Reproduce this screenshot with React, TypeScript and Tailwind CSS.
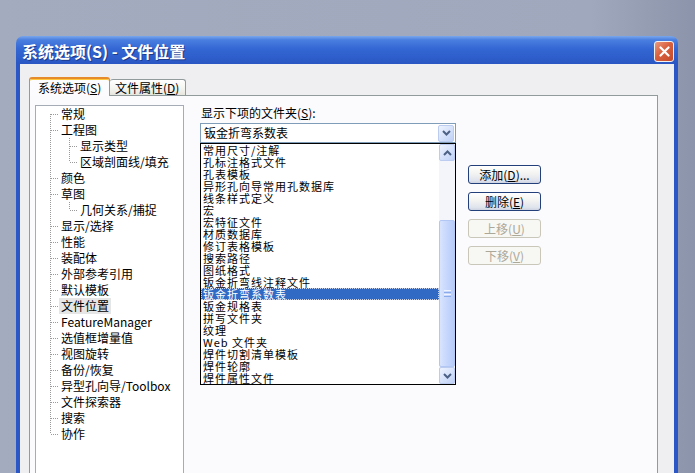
import type { ReactNode } from 'react';

type TreeItem = { label: string; level: 0 | 1 };

const treeItems: TreeItem[] = [
  { label: '常规', level: 0 },
  { label: '工程图', level: 0 },
  { label: '显示类型', level: 1 },
  { label: '区域剖面线/填充', level: 1 },
  { label: '颜色', level: 0 },
  { label: '草图', level: 0 },
  { label: '几何关系/捕捉', level: 1 },
  { label: '显示/选择', level: 0 },
  { label: '性能', level: 0 },
  { label: '装配体', level: 0 },
  { label: '外部参考引用', level: 0 },
  { label: '默认模板', level: 0 },
  { label: '文件位置', level: 0 },
  { label: 'FeatureManager', level: 0 },
  { label: '选值框增量值', level: 0 },
  { label: '视图旋转', level: 0 },
  { label: '备份/恢复', level: 0 },
  { label: '异型孔向导/Toolbox', level: 0 },
  { label: '文件探索器', level: 0 },
  { label: '搜索', level: 0 },
  { label: '协作', level: 0 },
];

const folderTypes = [
  '常用尺寸/注解',
  '孔标注格式文件',
  '孔表模板',
  '异形孔向导常用孔数据库',
  '线条样式定义',
  '宏',
  '宏特征文件',
  '材质数据库',
  '修订表格模板',
  '搜索路径',
  '图纸格式',
  '钣金折弯线注释文件',
  '钣金折弯系数表',
  '钣金规格表',
  '拼写文件夹',
  '纹理',
  'Web 文件夹',
  '焊件切割清单模板',
  '焊件轮廓',
  '焊件属性文件',
];

const selectedFolder = '钣金折弯系数表';
const selectedPage = '文件位置';

const Mnemonic = ({ children }: { children: ReactNode }) => (
  <span>
    (<span className="underline underline-offset-1">{children}</span>)
  </span>
);

const TreeLines = ({ index, level }: { index: number; level: 0 | 1 }) => {
  const lastRoot = treeItems.map((t) => t.level).lastIndexOf(0);
  const next = treeItems[index + 1];
  const lastChild = level === 1 && (!next || next.level === 0);
  const dash = { stroke: '#9a9a9a', strokeDasharray: '1 1', strokeWidth: 1 };
  return (
    <svg width={level ? 42 : 23} height={16} className="shrink-0">
      <line x1={14.5} x2={14.5} y1={index === 0 ? 8 : 0} y2={index === lastRoot ? 8 : 16} {...dash} />
      {level === 0 && <line x1={15} x2={22} y1={8.5} y2={8.5} {...dash} />}
      {level === 1 && (
        <>
          <line x1={33.5} x2={33.5} y1={0} y2={lastChild ? 8 : 16} {...dash} />
          <line x1={34} x2={41} y1={8.5} y2={8.5} {...dash} />
        </>
      )}
    </svg>
  );
};

const Chevron = ({ up }: { up?: boolean }) => (
  <svg width="9" height="6" viewBox="0 0 9 6">
    <path
      d={up ? 'M1 5 L4.5 1.5 L8 5' : 'M1 1 L4.5 4.5 L8 1'}
      fill="none"
      stroke="#4d6185"
      strokeWidth="2"
    />
  </svg>
);

const ScrollButton = ({ up }: { up?: boolean }) => (
  <div className="flex h-[17px] items-center justify-center rounded-[2px] border border-[#bccbf0] bg-[linear-gradient(135deg,#eef3fe_0%,#d2dffa_60%,#bfd0f6_100%)]">
    <Chevron up={up} />
  </div>
);

const XpButton = ({ children, disabled }: { children: ReactNode; disabled?: boolean }) => (
  <div
    className={
      disabled
        ? 'flex h-[19px] w-[73px] items-center justify-center rounded-[3px] border border-[#c9c7ba] bg-[#f7f7f4] text-[#aca899]'
        : 'flex h-[19px] w-[73px] items-center justify-center rounded-[3px] border border-[#24407a] bg-[linear-gradient(to_bottom,#ffffff_0%,#f3f3f1_45%,#dfe3ec_85%,#cdd3e2_100%)] text-black'
    }
  >
    {children}
  </div>
);

export default function App() {
  return (
    <div className="h-[473px] w-[695px] overflow-hidden bg-[linear-gradient(to_right,#a3abbf_0%,#9fa8bc_85%,#8b94aa_100%)] font-['Noto_Sans_CJK_SC','Liberation_Sans',sans-serif] text-[12px] text-black">
      <div className="ml-[16px] mt-[36px] flex h-[460px] w-[662px] flex-col overflow-hidden rounded-t-[7px]">
        {/* Title bar */}
        <div className="flex h-[28px] shrink-0 items-center justify-between bg-[linear-gradient(to_bottom,#7aa6ec_0%,#4a7fe0_14%,#3467d3_45%,#2d5dca_80%,#2a56c2_100%)] pl-[6px] pr-[4px]">
          <span className="pt-[2px] text-[16px] font-bold leading-[20px] text-white [text-shadow:1px_1px_0_#1c3a8c]">
            系统选项(S) - 文件位置
          </span>
          <div className="mt-[3px] flex h-[21px] w-[20px] items-center justify-center rounded-[3px] border border-[#f2f2f2] bg-[linear-gradient(135deg,#eb9a80_0%,#d9603e_45%,#c44a2a_100%)]">
            <svg width="11" height="11" viewBox="0 0 11 11">
              <path d="M1.5 1.5 L9.5 9.5 M9.5 1.5 L1.5 9.5" stroke="#ffffff" strokeWidth="2.2" strokeLinecap="round" />
            </svg>
          </div>
        </div>

        {/* Dialog body */}
        <div className="flex flex-1 flex-col border-x-[4px] border-[#2b57c6] bg-[#efeff2] pl-[9px] pr-[16px] pt-[13px]">
          {/* Tabs */}
          <div className="flex h-[18px] items-end">
            <div className="relative z-10 -mb-px flex h-[19px] w-[81px] items-center rounded-t-[3px] border-x border-t-[2px] border-x-[#919b9c] border-t-[#e68b2c] bg-[#fcfcfe] pl-[8px] leading-[14px] shadow-[inset_0_1px_0_#ffc73c]">
              系统选项<Mnemonic>S</Mnemonic>
            </div>
            <div className="flex h-[16px] w-[76px] items-center rounded-t-[3px] border-r border-t border-[#919b9c] bg-[linear-gradient(to_bottom,#ffffff_0%,#f3f3ef_60%,#e6e5de_100%)] pl-[5px] leading-[14px]">
              文件属性<Mnemonic>D</Mnemonic>
            </div>
          </div>

          {/* Tab page */}
          <div className="flex flex-1 gap-[16px] border border-[#919b9c] bg-[#fbfbfd] pl-[5px] pt-[9px]">
            {/* Options tree */}
            <div className="h-[420px] w-[149px] border border-[#a5acb5] bg-white">
              {treeItems.map((item, i) => (
                <div key={item.label} className="flex h-[16px] items-center">
                  <TreeLines index={i} level={item.level} />
                  <span
                    className={
                      item.label === selectedPage
                        ? 'bg-[#e6e6e6] px-[2px] leading-[16px]'
                        : 'px-[2px] leading-[16px]'
                    }
                  >
                    {item.label}
                  </span>
                </div>
              ))}
            </div>

            {/* Folder location settings */}
            <div className="flex w-[256px] flex-col">
              <div className="h-[16px] pl-px leading-[16px]">
                显示下项的文件夹<Mnemonic>S</Mnemonic>:
              </div>
              <div className="mt-[2px] flex h-[20px] items-center border border-[#7f9db9] bg-white pl-[3px] pr-px">
                <span className="flex-1 leading-[16px]">{selectedFolder}</span>
                <div className="flex h-[17px] w-[16px] items-center justify-center rounded-[2px] border border-[#bccbf0] bg-[linear-gradient(135deg,#eef3fe_0%,#d2dffa_60%,#bfd0f6_100%)]">
                  <Chevron />
                </div>
              </div>

              {/* Dropped-down list */}
              <div className="flex border border-black bg-white">
                <div className="flex-1 text-[11px] tracking-[1px]">
                  {folderTypes.map((name) => (
                    <div
                      key={name}
                      className={
                        name === selectedFolder
                          ? 'h-[12px] bg-[#316ac5] pl-[2px] leading-[12px] text-white outline-1 -outline-offset-1 outline-dotted outline-[#c8d4ee]'
                          : 'h-[12px] pl-[2px] leading-[12px]'
                      }
                    >
                      {name}
                    </div>
                  ))}
                </div>
                <div className="flex w-[16px] flex-col bg-[#f3f5fa]">
                  <ScrollButton up />
                  <div className="h-[59px]" />
                  <div className="flex h-[147px] items-center justify-center rounded-[2px] border border-[#b3c7f5] bg-[linear-gradient(to_right,#d9e4fd_0%,#c6d7fc_50%,#b7cbf8_100%)]">
                    <div className="flex w-[7px] flex-col gap-px">
                      <div className="h-px bg-[#eef3fe]" />
                      <div className="h-px bg-[#8cabeb]" />
                      <div className="h-px bg-[#eef3fe]" />
                      <div className="h-px bg-[#8cabeb]" />
                    </div>
                  </div>
                  <ScrollButton />
                </div>
              </div>
            </div>

            {/* Actions */}
            <div className="-ml-[4px] flex flex-col gap-[8px] pt-[60px]">
              <XpButton>
                添加<Mnemonic>D</Mnemonic>...
              </XpButton>
              <XpButton>
                删除<Mnemonic>E</Mnemonic>
              </XpButton>
              <XpButton disabled>
                上移<Mnemonic>U</Mnemonic>
              </XpButton>
              <XpButton disabled>
                下移<Mnemonic>V</Mnemonic>
              </XpButton>
            </div>
          </div>
        </div>
      </div>
    </div>
  );
}
